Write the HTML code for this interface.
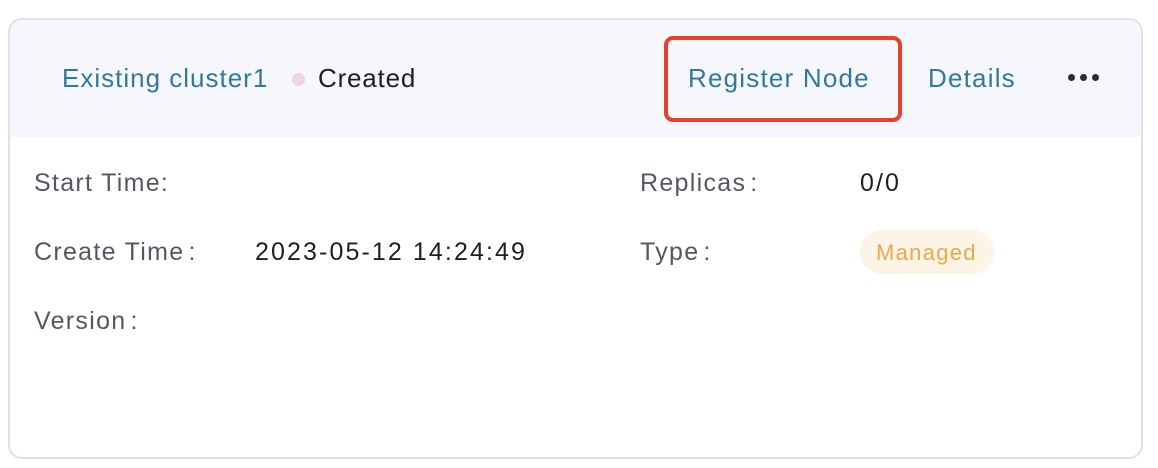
<!DOCTYPE html>
<html><head><style>
body{margin:0;width:1158px;height:468px;background:#fff;font-family:"Liberation Sans",sans-serif;position:relative;overflow:hidden}
.card{position:absolute;left:8px;top:18px;width:1131px;height:437px;border:2px solid #dfe1e8;border-radius:14px;overflow:hidden;background:#fff}
.hd{position:absolute;left:0;top:0;right:0;height:117px;background:#f6f7fc}
.t{position:absolute;white-space:nowrap;line-height:30px;font-size:26px;letter-spacing:1.2px}
.b{color:#2f7a9e}
.l{color:#545864;font-size:25px;letter-spacing:1.3px}
.v{color:#1e1f23;font-size:25px;letter-spacing:2.1px}
</style></head><body>
<div class="card"><div class="hd"></div></div>
<div class="t b" style="left:62px;top:63px;letter-spacing:1px">Existing cluster1</div>
<div style="position:absolute;left:292px;top:73px;width:13px;height:13px;border-radius:50%;background:#ecd7e0"></div>
<div class="t" style="left:318px;top:63px;color:#1e1f23;letter-spacing:0.8px">Created</div>
<div style="position:absolute;left:664px;top:36px;width:230px;height:78px;border:4px solid #e8402a;border-radius:9px"></div>
<div class="t b" style="left:688px;top:63px">Register Node</div>
<div class="t b" style="left:928px;top:63px">Details</div>
<div style="position:absolute;left:1068px;top:74px;display:flex;gap:5px"><span style="width:7px;height:7px;border-radius:50%;background:#2a2c33"></span><span style="width:7px;height:7px;border-radius:50%;background:#2a2c33"></span><span style="width:7px;height:7px;border-radius:50%;background:#2a2c33"></span></div>
<div class="t l" style="left:34px;top:168px">Start Time<span style="letter-spacing:0">:</span></div>
<div class="t l" style="left:34px;top:237px">Create Time<span style="margin-left:4px">:</span></div>
<div class="t v" style="left:255px;top:237px">2023-05-12 14:24:49</div>
<div class="t l" style="left:34px;top:306px">Version<span style="margin-left:4px">:</span></div>
<div class="t l" style="left:640px;top:168px">Replicas<span style="margin-left:4px">:</span></div>
<div class="t v" style="left:860px;top:168px">0/0</div>
<div class="t l" style="left:640px;top:237px">Type<span style="margin-left:4px">:</span></div>
<div style="position:absolute;left:860px;top:230px;width:134px;height:44px;border-radius:22px;background:#fdf3e6"></div>
<div class="t" style="left:876px;top:238px;color:#eaa94a;font-size:22px;letter-spacing:1.3px">Managed</div>
</body></html>
